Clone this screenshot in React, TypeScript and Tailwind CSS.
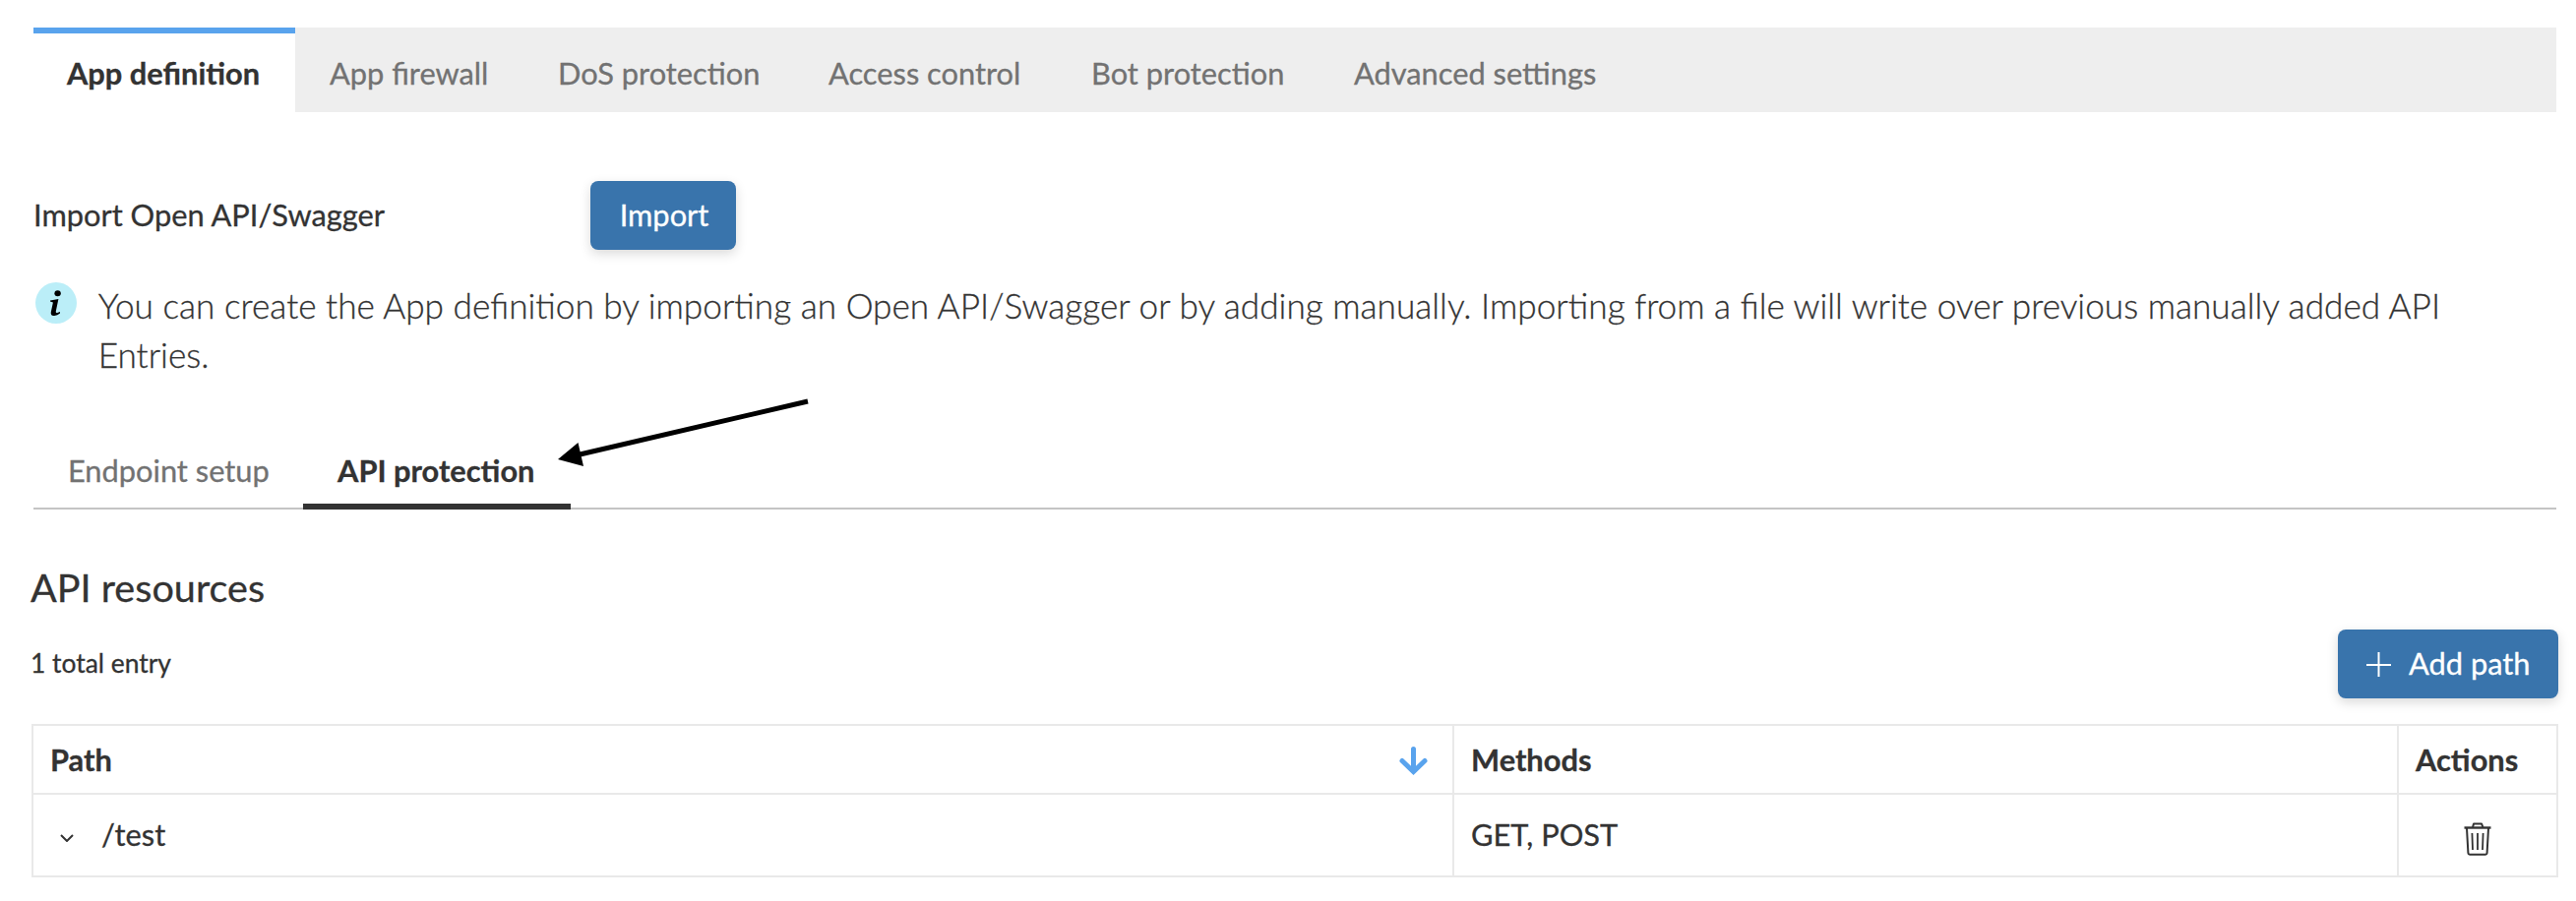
import React from "react";

const TABS = [
  { label: "App firewall", width: "w-[232px]" },
  { label: "DoS protection", width: "w-[275px]" },
  { label: "Access control", width: "w-[267px]" },
  { label: "Bot protection", width: "w-[267px]" },
  { label: "Advanced settings", width: "w-[317px]" },
];

function InfoIcon() {
  return (
    <svg className="h-[42px] w-[42px] shrink-0" viewBox="0 0 42 42">
      <circle cx="21" cy="21" r="21" fill="#bbeef8" />
      <ellipse cx="22.6" cy="11.3" rx="3.2" ry="3" fill="#000" />
      <path d="M15 18.4 L23.4 17 L20.8 29.5 Q20.6 31.4 22.2 30.9 L25 30 L25 31.6 Q22 34.4 18.4 34 Q15.2 33.6 15.8 30.2 L17.9 20.4 L15 19.6 Z" fill="#000" />
    </svg>
  );
}

function TrashIcon() {
  return (
    <svg className="h-[34px] w-[28px]" viewBox="0 0 28 34" fill="none" stroke="#333" strokeLinejoin="round">
      <path d="M0.5 5.5H27.5" strokeWidth="2.4" />
      <path d="M9 5L10 1.4H18L19.4 5" strokeWidth="2" />
      <path d="M3 6L4.4 31Q4.6 32.8 6.4 32.8H21.6Q23.4 32.8 23.6 31L25 6" strokeWidth="2" />
      <path d="M8.4 11L9 28M14 11V28M19.6 11L19 28" strokeWidth="1.8" />
    </svg>
  );
}

export default function App() {
  return (
    <div className="relative h-[916px] w-[2618px] overflow-hidden bg-white font-['Lato',sans-serif] text-[30.8px] leading-[40px] text-[#333] [-webkit-text-stroke:0.3px]">
      <nav className="mt-7 ml-[34px] flex h-[86px] w-[2564px] bg-[#eee]">
        <div className="w-[266px] border-t-[6px] border-[#59a3ed] bg-white pt-[21px] pl-[34px] font-bold whitespace-nowrap">App definition</div>
        {TABS.map((t) => (
          <div key={t.label} className={`${t.width} pt-[27px] pl-[35px] font-normal whitespace-nowrap text-[#727272]`}>{t.label}</div>
        ))}
      </nav>
      <section className="mt-[70px] ml-[34px] flex h-[70px] items-center">
        <div className="w-[566px] font-normal">Import Open API/Swagger</div>
        <button className="h-[70px] w-[148px] rounded-[8px] bg-[#3974ac] pl-[2px] font-normal text-white shadow-[0_4px_12px_rgba(0,0,0,0.15)]">Import</button>
      </section>
      <section className="mt-[33px] ml-[35.7px] flex h-[113px]">
        <InfoIcon />
        <p className="-mt-[2px] ml-[22px] text-[35.2px] leading-[50px] font-light whitespace-nowrap">
          You can create the App definition by importing an Open API/Swagger or by adding manually. Importing from a file will write over previous manually added API
          <br />
          Entries.
        </p>
      </section>
      <nav className="mt-[44px] ml-[34px] flex h-[74px] w-[2564px] bg-[linear-gradient(#c4c4c4,#c4c4c4)] bg-[length:100%_2px] bg-bottom bg-no-repeat">
        <div className="w-[274px] pt-[15px] pl-[35px] font-normal whitespace-nowrap text-[#727272]">Endpoint setup</div>
        <div className="w-[272px] border-b-[6px] border-[#333] pt-[15px] pl-[35px] font-bold whitespace-nowrap">API protection</div>
      </nav>
      <h2 className="mt-[54px] ml-[31px] h-[50px] text-[39.6px] leading-[50px] font-normal">API resources</h2>
      <div className="mt-[18px] ml-[31px] flex h-[70px] w-[2569px] items-center justify-between">
        <div className="pb-[2px] text-[26.4px] font-normal">1 total entry</div>
        <button className="flex h-[70px] w-[224px] items-center rounded-[8px] bg-[#3974ac] pl-[29px] font-normal whitespace-nowrap text-white shadow-[0_4px_12px_rgba(0,0,0,0.15)]">
          <svg className="mr-[18px] h-[25px] w-[25px]" viewBox="0 0 25 25" stroke="#fff" strokeWidth="2"><path d="M0 13H25M12.5 0V25" /></svg>
          Add path
        </button>
      </div>
      <div className="mt-[26px] ml-[32px] grid w-[2568px] grid-cols-[1444px_960px_162px] grid-rows-[70px_84px] border-t-2 border-l-2 border-[#e9e9e9]">
        <div className="flex items-center justify-between border-r-2 border-b-2 border-[#e9e9e9] pt-[2px] pr-[25px] pl-[17px] font-bold">
          Path
          <svg className="h-[29px] w-[29px]" viewBox="0 0 29 29" fill="none" stroke="#59a3ed" strokeWidth="5" strokeLinecap="round"><path d="M14.5 2.5V25M3 14.5L14.5 25.5L26 14.5" /></svg>
        </div>
        <div className="flex items-center border-r-2 border-b-2 border-[#e9e9e9] pt-[2px] pl-[17px] font-bold">Methods</div>
        <div className="flex items-center border-r-2 border-b-2 border-[#e9e9e9] pt-[2px] pl-[17px] font-bold">Actions</div>
        <div className="flex items-center border-r-2 border-b-2 border-[#e9e9e9] pl-[27px] font-normal">
          <svg className="mt-[6px] mr-[28px] h-[8px] w-[14px]" viewBox="0 0 14 8" fill="none" stroke="#333" strokeWidth="2"><path d="M1 1L7 7L13 1" /></svg>
          /test
        </div>
        <div className="flex items-center border-r-2 border-b-2 border-[#e9e9e9] pl-[17px] font-normal">GET, POST</div>
        <div className="flex items-center justify-center border-r-2 border-b-2 border-[#e9e9e9] pt-[8px]"><TrashIcon /></div>
      </div>
      <svg className="absolute top-[400px] left-[560px] h-[80px] w-[270px]" viewBox="560 400 270 80">
        <path d="M821 408L585 463" stroke="#000" strokeWidth="5" />
        <path d="M567 467L587.5 450L593 474Z" />
      </svg>
    </div>
  );
}
